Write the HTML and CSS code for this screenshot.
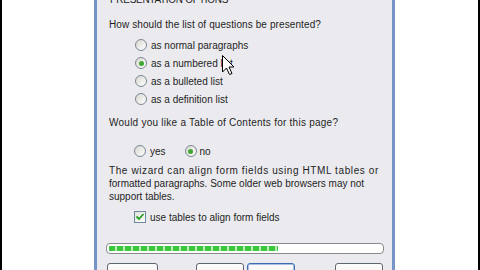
FILE: index.html
```html
<!DOCTYPE html>
<html lang="en">
<head>
    <meta charset="UTF-8">
    <title>Form Page Wizard</title>
    <link rel="stylesheet" href="styles.css">
</head>
<body>
    <div class="screen">
        <div class="edge"></div>
        <div class="gutter-left"></div>
        <div class="dialog">
            <div class="title">PRESENTATION OPTIONS</div>
            <div class="question">How should the list of questions be presented?</div>
            <div class="options">
                <div class="opt"><span class="radio"></span><span>as normal paragraphs</span></div>
                <div class="opt"><span class="radio checked"></span><span>as a numbered list</span></div>
                <div class="opt"><span class="radio"></span><span>as a bulleted list</span></div>
                <div class="opt"><span class="radio"></span><span>as a definition list</span></div>
            </div>
            <div class="question q2">Would you like a Table of Contents for this page?</div>
            <div class="opt inline">
                <span class="radio"></span><span>yes</span>
                <span class="radio checked no"></span><span>no</span>
            </div>
            <div class="note">
                <div class="wide">The wizard can align form fields using HTML tables or</div>
                <div>formatted paragraphs. Some older web browsers may not</div>
                <div>support tables.</div>
            </div>
            <div class="opt check-row">
                <span class="checkbox">
                    <svg width="10" height="10" viewBox="0 0 10 10"><path d="M1.5 4.5 L4 7 L8.5 2" fill="none" stroke="#22a022" stroke-width="1.8"/></svg>
                </span>
                <span>use tables to align form fields</span>
            </div>
            <div class="progress"><div class="fill"></div></div>
            <div class="buttons">
                <div class="btn b-cancel">Cancel</div>
                <div class="btn b-back">&lt; Back</div>
                <div class="btn b-next">Next &gt;</div>
                <div class="btn b-finish">Finish</div>
            </div>
        </div>
        <div class="gutter-right"></div>
        <div class="edge"></div>
    </div>
    <svg class="pointer" width="13" height="21" viewBox="0 0 13 21">
        <path d="M0.5 0.5 L0.5 17 L4.5 13 L7.5 19.5 L10 18.5 L7 12 L12 12 Z" fill="#fff" stroke="#000" stroke-width="1"/>
    </svg>
</body>
</html>
```

FILE: styles.css
```css
body {
    margin: 0;
    background: #fff;
    font: 10px "Liberation Sans", Arial, sans-serif;
    color: #1e1e1e;
    overflow: hidden;
}
.screen {
    display: flex;
    height: 270px;
    overflow: hidden;
}
.edge {
    width: 2px;
    background: #000;
}
.gutter-left {
    width: 92px;
}
.gutter-right {
    width: 83px;
}
.dialog {
    width: 283px;
    padding-left: 12px;
    background: #ebebef;
    border-left: 3px solid #7694c7;
    border-right: 3px solid #7694c7;
    overflow: hidden;
}
.title {
    line-height: 13px;
    margin-top: -7px;
    margin-left: 1px;
    letter-spacing: -0.3px;
}
.question {
    line-height: 13px;
    margin-top: 12px;
    letter-spacing: 0.1px;
}
.options {
    margin-top: 5px;
}
.opt {
    display: flex;
    align-items: center;
    height: 18px;
    padding-left: 26px;
}
.radio {
    box-sizing: border-box;
    width: 12px;
    height: 12px;
    margin-right: 4px;
    border-radius: 50%;
    border: 1px solid #7c8793;
    background: linear-gradient(135deg, #d8d8d2, #fdfdfd);
    position: relative;
}
.radio.checked::after {
    content: "";
    position: absolute;
    left: 2.5px;
    top: 2.5px;
    width: 5px;
    height: 5px;
    border-radius: 50%;
    background: #3fa632;
}
.q2 {
    margin-top: 8px;
    letter-spacing: 0.25px;
}
.inline {
    margin-top: 13px;
    padding-left: 25px;
}
.radio.no {
    margin-left: 19px;
    margin-right: 3px;
}
.note {
    line-height: 13px;
    margin-top: 4px;
}
.note .wide {
    letter-spacing: 0.6px;
}
.check-row {
    margin-top: 5px;
    padding-left: 25px;
}
.checkbox {
    box-sizing: border-box;
    width: 12px;
    height: 12px;
    margin-right: 4px;
    border: 1px solid #6d87a3;
    background: linear-gradient(135deg, #e0e0da, #fff);
    display: flex;
    align-items: center;
    justify-content: center;
}
.progress {
    box-sizing: border-box;
    margin-top: 17px;
    margin-left: -3px;
    width: 278px;
    height: 11px;
    border: 1px solid #8a8a8a;
    border-radius: 4px;
    background: #fff;
    padding: 2px 2px;
}
.fill {
    width: 169px;
    height: 5px;
    background: repeating-linear-gradient(90deg, #3cc63c 0 6px, #b8ecb8 6px 8px);
}
.buttons {
    display: flex;
    margin-top: 9px;
    margin-left: -2px;
}
.btn {
    box-sizing: border-box;
    width: 48px;
    height: 22px;
    border: 1px solid #5e6670;
    border-radius: 3px;
    background: linear-gradient(#fdfdfd, #ecebe6);
    text-align: center;
    line-height: 26px;
    color: #777;
}
.b-cancel {
    width: 51px;
}
.b-back {
    margin-left: 38px;
}
.b-next {
    margin-left: 3px;
    border-color: #3c6bb0;
    box-shadow: inset 0 0 0 1px #a8c0e8;
}
.b-finish {
    margin-left: 40px;
}
.pointer {
    position: absolute;
    left: 222px;
    top: 55px;
}
```
